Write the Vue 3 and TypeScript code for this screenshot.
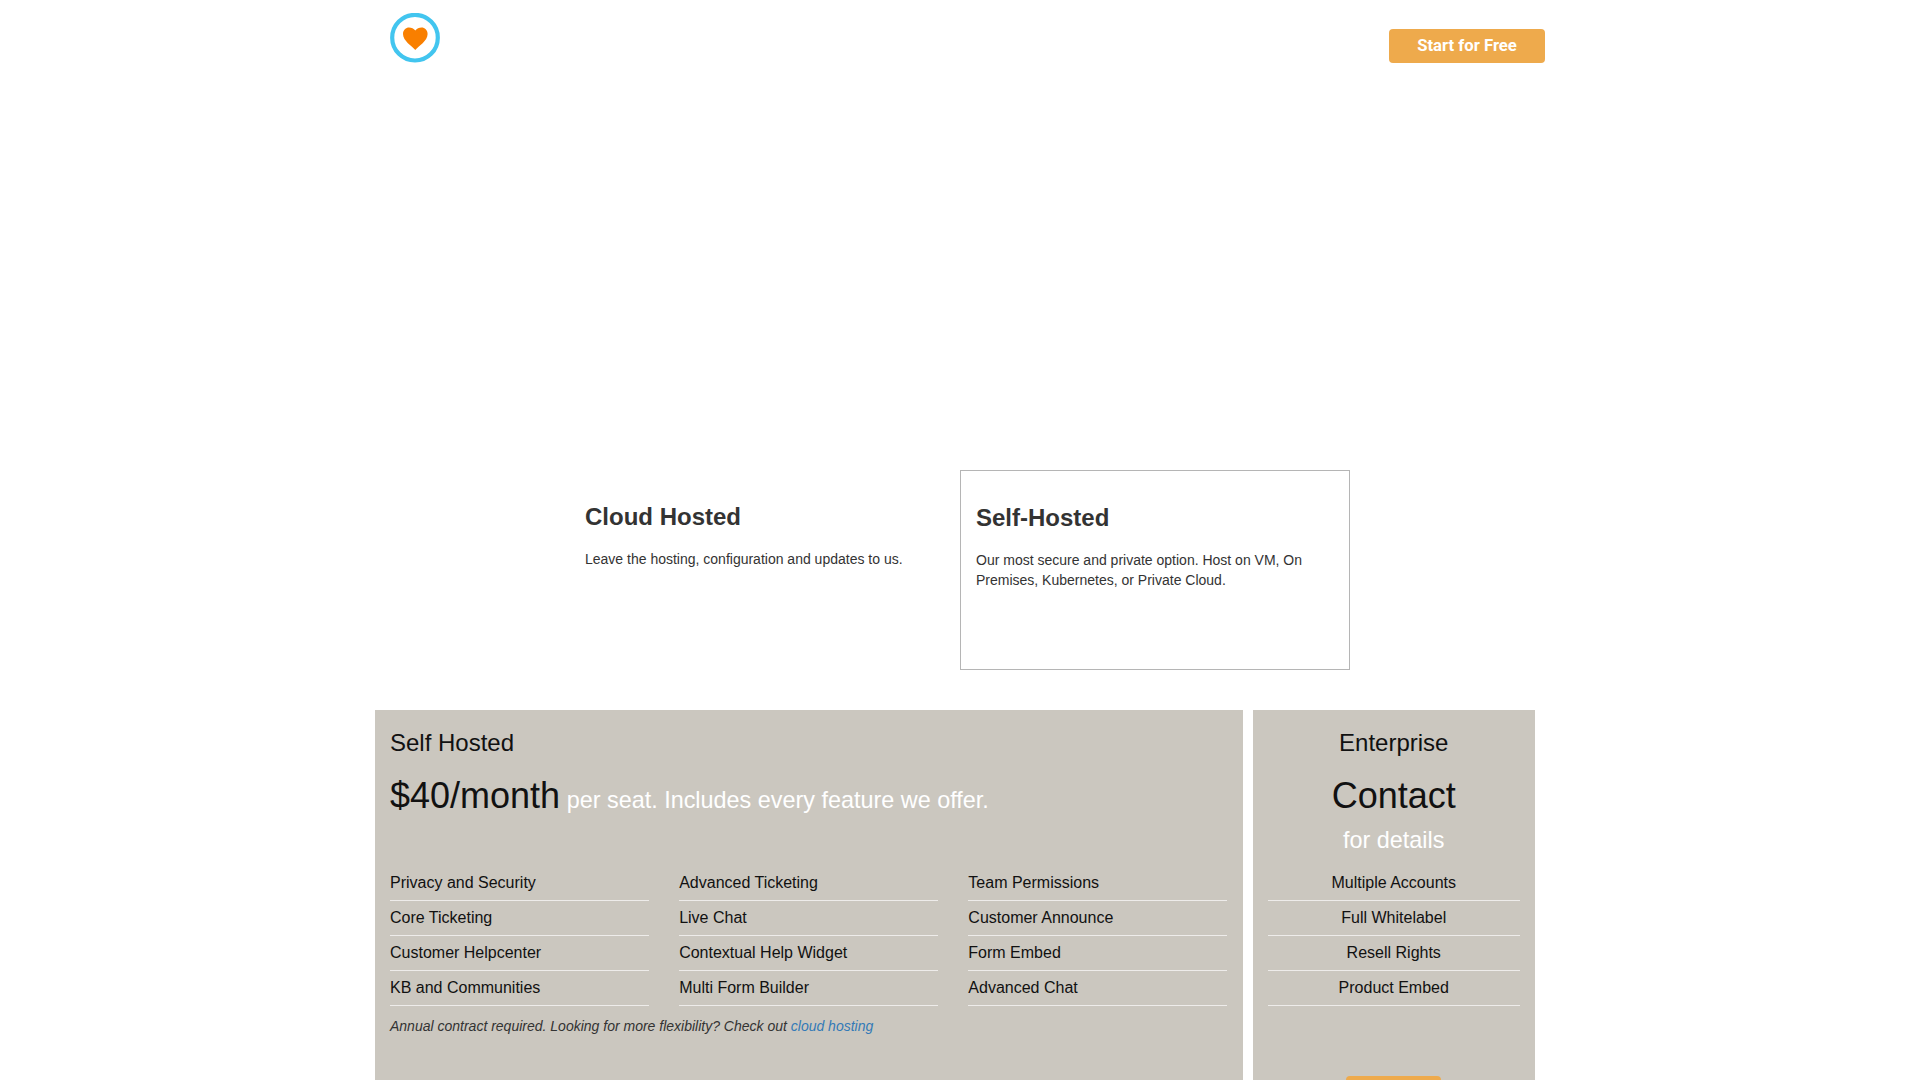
<script setup lang="ts">
const featureColumns: string[][] = [
  ['Privacy and Security', 'Core Ticketing', 'Customer Helpcenter', 'KB and Communities'],
  ['Advanced Ticketing', 'Live Chat', 'Contextual Help Widget', 'Multi Form Builder'],
  ['Team Permissions', 'Customer Announce', 'Form Embed', 'Advanced Chat'],
]
const enterpriseFeatures: string[] = ['Multiple Accounts', 'Full Whitelabel', 'Resell Rights', 'Product Embed']
</script>

<template>
  <div class="page">
    <header class="nav">
      <a class="logo" href="#" aria-label="Home">
        <svg width="50" height="50" viewBox="0 0 50 50">
          <circle cx="25" cy="24.7" r="22.8" fill="#fff" stroke="#42c5ef" stroke-width="4.2" />
          <path
            d="M25.3 37 C22 33 13 28 13 21 C13 17 16 14.5 19 14.5 C21.5 14.5 23.8 15.5 25.3 17.5 C26.8 15.5 29.1 14.5 31.6 14.5 C34.6 14.5 37.6 17 37.6 21 C37.6 28 28.6 33 25.3 37 Z"
            fill="#f97f00"
          />
        </svg>
      </a>
      <a class="start" href="#">Start for Free</a>
    </header>

    <section class="hosting">
      <div class="option">
        <h3>Cloud Hosted</h3>
        <p>Leave the hosting, configuration and updates to us.</p>
      </div>
      <div class="option active">
        <h3>Self-Hosted</h3>
        <p>Our most secure and private option. Host on VM, On Premises, Kubernetes, or Private Cloud.</p>
      </div>
    </section>

    <section class="plans">
      <div class="plan">
        <div class="plan-head">
          <h3 class="plan-name">Self Hosted</h3>
          <div class="price"><span class="amount">$40/month</span> <span class="note">per seat. Includes every feature we offer.</span></div>
        </div>
        <div class="columns">
          <ul v-for="(column, index) in featureColumns" :key="index" class="features">
            <li v-for="feature in column" :key="feature">{{ feature }}</li>
          </ul>
        </div>
        <p class="contract">Annual contract required. Looking for more flexibility? Check out <a href="#">cloud hosting</a></p>
      </div>

      <div class="plan enterprise">
        <div class="plan-head">
          <h3 class="plan-name">Enterprise</h3>
          <div class="price"><span class="amount">Contact</span></div>
          <div class="note details">for details</div>
        </div>
        <ul class="features">
          <li v-for="feature in enterpriseFeatures" :key="feature">{{ feature }}</li>
        </ul>
        <a class="contact" href="#" aria-label="Contact"></a>
      </div>
    </section>
  </div>
</template>

<style scoped>
.page {
  width: 1170px;
  margin: 0 auto;
  font-family: "Liberation Sans", Arial, sans-serif;
  color: #333;
  font-size: 14px;
  line-height: 20px;
}
.nav {
  display: flex;
  justify-content: space-between;
  align-items: flex-start;
  height: 470px;
  padding-left: 15px;
  box-sizing: border-box;
}
.logo {
  display: block;
  width: 50px;
  height: 50px;
  margin-top: 13px;
}
.logo svg {
  display: block;
}
.start {
  margin-top: 29px;
  width: 156px;
  height: 34px;
  background: #eeaa4c;
  border-radius: 4px;
  color: #fff;
  font-family: Roboto, "Liberation Sans", sans-serif;
  font-weight: 700;
  font-size: 16.7px;
  line-height: 33px;
  text-align: center;
  text-decoration: none;
}
.hosting {
  display: flex;
  justify-content: center;
}
.option {
  width: 390px;
  height: 200px;
  padding: 15px;
  box-sizing: border-box;
}
.option.active {
  border: 1px solid #b5b5b5;
}
.option h3 {
  margin: 19px 0 19px;
  font-size: 24px;
  line-height: 26px;
  font-weight: 700;
  color: #333;
}
.option p {
  margin: 0;
}
.plans {
  display: grid;
  grid-template-columns: 3fr 1fr;
  margin-top: 40px;
}
.plan {
  background: #cbc7bf;
  margin-right: 10px;
  padding-bottom: 40px;
}
.plan-head {
  height: 156px;
  padding: 20px 15px 0;
  box-sizing: border-box;
}
.plan-name {
  margin: 0;
  font-size: 24px;
  line-height: 26px;
  font-weight: 400;
  color: #111;
}
.price {
  margin-top: 20px;
  font-size: 23.4px;
  line-height: 40px;
}
.amount {
  font-size: 36px;
  color: #111;
}
.note {
  font-size: 23.4px;
  color: #fff;
}
.details {
  margin-top: 7px;
  line-height: 26px;
}
.columns {
  display: grid;
  grid-template-columns: repeat(3, 1fr);
}
.features {
  list-style: none;
  margin: 0;
  padding: 0 15px;
}
.features li {
  padding: 7px 0;
  font-size: 16px;
  line-height: 20px;
  color: #111;
  border-bottom: 1px solid #eeecea;
}
.contract {
  margin: 10px 15px 0;
  font-style: italic;
  color: #333;
}
.contract a {
  color: #337ab7;
  text-decoration: none;
}
.enterprise {
  text-align: center;
}
.contact {
  display: block;
  width: 95px;
  height: 34px;
  margin: 70px auto 0;
  background: #eeaa4c;
  border-radius: 4px;
}
</style>

<style>
body {
  background: #fff;
}
</style>
